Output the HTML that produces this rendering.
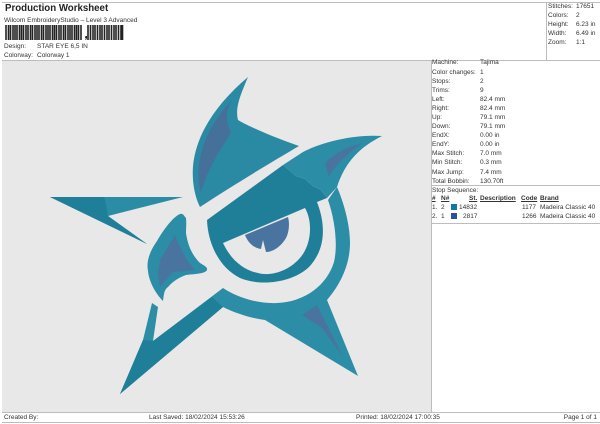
<!DOCTYPE html>
<html><head><meta charset="utf-8"><style>
html,body{margin:0;padding:0;background:#fff}
#p{position:relative;width:600px;height:424px;overflow:hidden;background:#fff;font-family:"Liberation Sans",sans-serif;font-size:6.5px;color:#333}
#p span{position:absolute;white-space:nowrap;line-height:12px}
.l{position:absolute;background:#bdbdbd}
u{text-decoration:underline}
b{font-weight:bold}
</style></head><body><div id="p">
<div style="position:absolute;left:2px;top:60px;width:429px;height:352px;background:#e8e8e8"></div>
<div class="l" style="left:2px;top:2px;width:598px;height:1px"></div>
<div class="l" style="left:2px;top:60px;width:598px;height:1px"></div>
<div class="l" style="left:431px;top:60px;width:1px;height:352px"></div>
<div class="l" style="left:546px;top:2px;width:1px;height:58px"></div>
<div class="l" style="left:432px;top:185px;width:168px;height:1px"></div>
<div class="l" style="left:432px;top:223px;width:168px;height:1px"></div>
<div class="l" style="left:2px;top:412px;width:598px;height:1px"></div>
<div class="l" style="left:2px;top:422px;width:598px;height:1px"></div>

<span style="left:5px;top:4px;font:bold 9.7px/10px 'Liberation Sans',sans-serif;color:#222">Production Worksheet</span>
<span style="left:4px;top:15px">Wilcom EmbroideryStudio – Level 3 Advanced</span>
<svg style="position:absolute;left:0;top:0" width="130" height="48"><path stroke="#222" fill="none" stroke-width="1.6" d="M6 25V40M8.500 25V40M10.500 25V40M13 25V40M15 25V40M17 25V40M19.500 25V40M21.500 25V40M23.500 25V40M26 25V40M28 25V40M30.500 25V40M32.500 25V40M35 25V40M37 25V40M39 25V40M41.500 25V40M43.500 25V40M46 25V40M48 25V40M50 25V40M52.500 25V40M54.500 25V40M56.500 25V40M59 25V40M61 25V40M63.500 25V40M65.500 25V40M68 25V40M70 25V40M72 25V40M74.500 25V40M76.500 25V40M78.500 25V40M81 25V40M88 25V40M90.500 25V40M93 25V40M95 25V40M97.500 25V40M100 25V40M102 25V40M104.500 25V40M107 25V40M109 25V40M111.500 25V40M114 25V40M116 25V40M118.500 25V40M121 25V40M122.500 25V40"/><path d="M85.500 36h1.500v2l-1 2h-.7l.5-2h-.8z" fill="#222"/></svg>
<span style="left:4px;top:41px">Design:</span><span style="left:37px;top:41px">STAR EYE 6,5 IN</span>
<span style="left:4px;top:50px">Colorway:</span><span style="left:37px;top:50px">Colorway 1</span>

<svg style="position:absolute;left:0;top:0" width="431" height="412" viewBox="0 0 431 412">
<g stroke-linejoin="round">
<!-- top wing -->
<path d="M248 77C240 96 235 108 238 120C246 125 270 136 299 146C270 163 232 186 200 207C194 195 192 180 193 166C196 135 215 105 248 77Z" fill="#2a8aa3"/>
<path d="M232 100C225 112 226 122 231 133C220 150 206 172 201 193C197 178 198 165 202 150C207 132 218 115 232 100Z" fill="#44709a"/>
<!-- left arm -->
<path d="M50 197H183L108 216L147 244Z" fill="#2a8ca5"/>
<path d="M50 197H104L105 200L108 216L147 244Z" fill="#1f7f99"/>
<!-- left wing -->
<path d="M180 214C173 217 164 229 157 241C150 251 146 261 148 271C149 282 156 294 163 301C164 294 164 290 168 287C173 281 180 277 186 275C193 274 205 274 207 270C208 267 203 265 200 263C193 256 188 247 186 233C186 226 187 217 185 217C184 215 182 213 180 214Z" fill="#2b8da6"/>
<path d="M175 235L160 260L158 273L160 287L173 272L195 270L187 260L178 243Z" fill="#4a74a0"/>
<!-- star bottom / outer ring -->
<path d="M152 303L158 307L153 341L223 288C235 296 255 304 277 303C305 302 327 285 334 262C338 245 335 220 328 200L337 187C344 203 350 225 350 243C350 265 340 285 327 300L358 376L265 320C250 318 235 313 223 307L120 394L143 340Z" fill="#2b8da6"/>
<path d="M143 340L153 341L212 297L223 307L120 394Z" fill="#1f7f99"/>
<path d="M317 305L302 315L322 328L343 357Z" fill="#4a74a0"/>
<!-- eye: lid and inner ring -->
<path fill-rule="evenodd" fill="#1f7f99" d="M207 220L283 165L296 176L305 179L313 186L321 190L327 198L317 202C326 225 326 250 308 268C292 282 262 287 240 278C220 268 208 245 207 220ZM223 243L305 208C312 220 312 240 303 254C292 270 272 277 258 273C242 270 230 258 223 243Z"/>
<path d="M283 165L303 152C318 144 350 134 382 136C360 147 345 162 337 187L327 198L321 190L313 186L305 179L296 176Z" fill="#2b8da6"/>
<path d="M363 143C348 146 335 153 325 163L329 177C333 168 345 155 363 143Z" fill="#4a74a0"/>
<!-- pupil -->
<path d="M245 235L288 217C290 224 289 235 284 241C279 248 272 252 266 252L263 240L261 249C254 248 248 243 245 235Z" fill="#4a74a0"/>
</g>
</svg>

<span style="left:548px;top:1px">Stitches:</span><span style="left:576px;top:1px">17651</span>
<span style="left:548px;top:10px">Colors:</span><span style="left:576px;top:10px">2</span>
<span style="left:548px;top:19px">Height:</span><span style="left:576px;top:19px">6.23 in</span>
<span style="left:548px;top:28px">Width:</span><span style="left:576px;top:28px">6.49 in</span>
<span style="left:548px;top:37px">Zoom:</span><span style="left:576px;top:37px">1:1</span>

<span style="left:432px;top:57px">Machine:</span><span style="left:480px;top:57px">Tajima</span>
<span style="left:432px;top:67px">Color changes:</span><span style="left:480px;top:67px">1</span>
<span style="left:432px;top:76px">Stops:</span><span style="left:480px;top:76px">2</span>
<span style="left:432px;top:85px">Trims:</span><span style="left:480px;top:85px">9</span>
<span style="left:432px;top:94px">Left:</span><span style="left:480px;top:94px">82.4 mm</span>
<span style="left:432px;top:103px">Right:</span><span style="left:480px;top:103px">82.4 mm</span>
<span style="left:432px;top:112px">Up:</span><span style="left:480px;top:112px">79.1 mm</span>
<span style="left:432px;top:121px">Down:</span><span style="left:480px;top:121px">79.1 mm</span>
<span style="left:432px;top:130px">EndX:</span><span style="left:480px;top:130px">0.00 in</span>
<span style="left:432px;top:139px">EndY:</span><span style="left:480px;top:139px">0.00 in</span>
<span style="left:432px;top:148px">Max Stitch:</span><span style="left:480px;top:148px">7.0 mm</span>
<span style="left:432px;top:157px">Min Stitch:</span><span style="left:480px;top:157px">0.3 mm</span>
<span style="left:432px;top:167px">Max Jump:</span><span style="left:480px;top:167px">7.4 mm</span>
<span style="left:432px;top:176px">Total Bobbin:</span><span style="left:480px;top:176px">130.70ft</span>
<span style="left:432px;top:185px">Stop Sequence:</span>

<span style="left:432px;top:193px"><b><u>#</u></b></span><span style="left:441px;top:193px"><b><u>N#</u></b></span><span style="left:469px;top:193px"><b><u>St.</u></b></span><span style="left:480px;top:193px"><b><u>Description</u></b></span><span style="left:521px;top:193px"><b><u>Code</u></b></span><span style="left:540px;top:193px"><b><u>Brand</u></b></span>
<span style="left:432px;top:202px">1.</span><span style="left:441px;top:202px">2</span><div style="position:absolute;left:451px;top:204px;width:6px;height:6px;background:#1277ab"></div><span style="left:459px;top:202px">14832</span><span style="left:522px;top:202px">1177</span><span style="left:540px;top:202px">Madeira Classic 40</span>
<span style="left:432px;top:211px">2.</span><span style="left:441px;top:211px">1</span><div style="position:absolute;left:451px;top:213px;width:6px;height:6px;background:#27529c"></div><span style="left:463px;top:211px">2817</span><span style="left:522px;top:211px">1266</span><span style="left:540px;top:211px">Madeira Classic 40</span>

<span style="left:4px;top:412px">Created By:</span>
<span style="left:149px;top:412px">Last Saved: 18/02/2024 15:53:26</span>
<span style="left:356px;top:412px">Printed: 18/02/2024 17:00:35</span>
<span style="right:3px;top:412px">Page 1 of 1</span>
</div></body></html>
